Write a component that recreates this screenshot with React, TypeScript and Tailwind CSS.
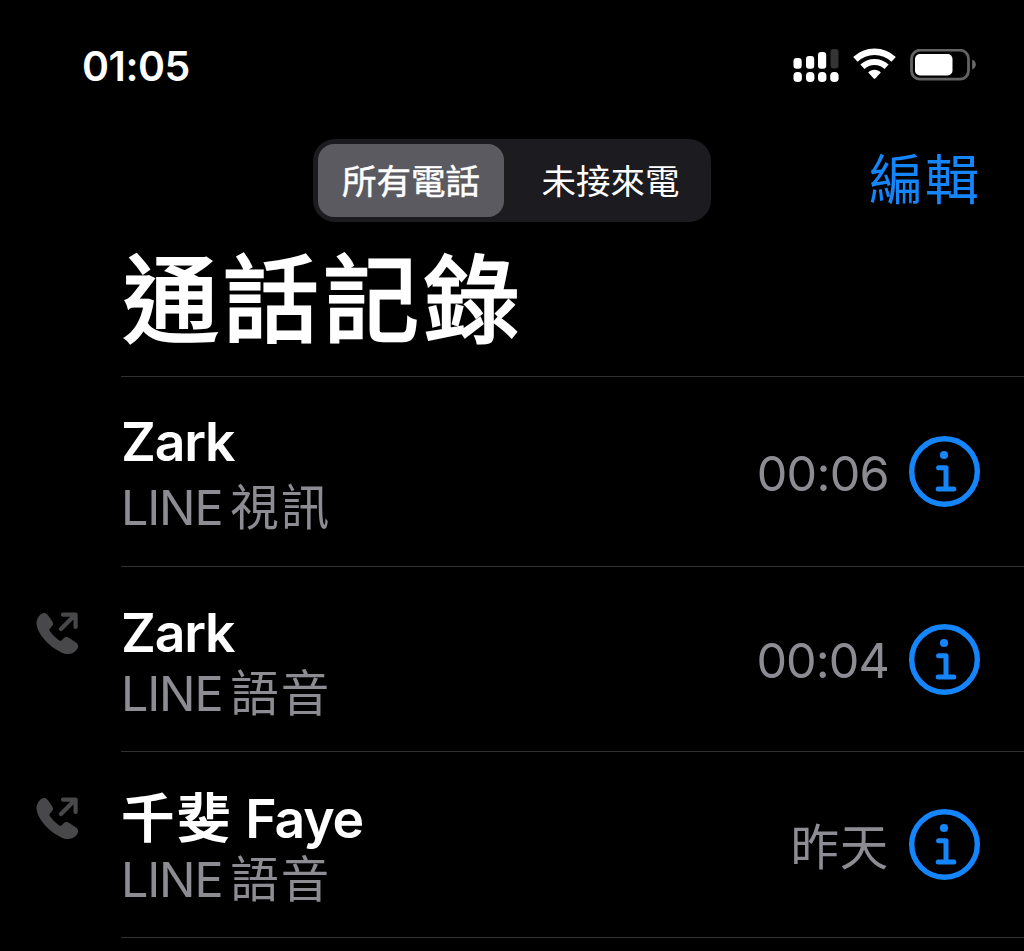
type Call = {
  prefix?: string;
  name: string;
  detail: string;
  time: string;
  outgoing: boolean;
  row: string;
  top: string;
  gap: string;
  timeStyle: string;
};

const calls: Call[] = [
  { name: 'Zark', detail: '視訊', time: '00:06', outgoing: false, row: 'h-[190px]', top: 'pt-[35px]', gap: 'mt-[11px]', timeStyle: 'pt-[4px] tracking-[-0.7px]' },
  { name: 'Zark', detail: '語音', time: '00:04', outgoing: true, row: 'h-[185px]', top: 'pt-[36px]', gap: 'mt-[6px]', timeStyle: 'pt-[4px] tracking-[-0.9px]' },
  { prefix: '千斐', name: ' Faye', detail: '語音', time: '昨天', outgoing: true, row: 'h-[186px]', top: 'pt-[37px]', gap: 'mt-[6px]', timeStyle: 'pt-[7px] tracking-[0.8px]' },
];

function SignalIcon() {
  return (
    <svg width="46" height="34" viewBox="0 0 46 34" fill="#fff">
      <rect x="0.5" y="10" width="8.2" height="10.8" rx="3.2" />
      <rect x="13" y="8" width="8.2" height="12.8" rx="3" />
      <rect x="25" y="4" width="8.2" height="16.8" rx="3" />
      <rect x="37.5" y="1" width="8" height="19.5" rx="3" fill="#343434" />
      <rect x="0.5" y="24" width="8.4" height="10" rx="3.8" />
      <rect x="13" y="24" width="8.4" height="10" rx="3.8" />
      <rect x="25" y="24" width="8.4" height="10" rx="3.8" />
      <rect x="37.2" y="24" width="8.4" height="10" rx="3.8" />
    </svg>
  );
}

function WifiIcon() {
  return (
    <svg width="44" height="32" viewBox="0 0 44 32" fill="none" stroke="#fff">
      <path d="M2.4 11.4 A27.5 27.5 0 0 1 40.6 11.4" strokeWidth="6.4" />
      <path d="M9.4 18.8 A17.6 17.6 0 0 1 33.6 18.8" strokeWidth="6" />
      <path d="M15.2 24.6 C18.6 20.8 24.4 20.8 27.8 24.6 L22.3 30.5 Q21.5 31.3 20.7 30.5 Z" fill="#fff" stroke="none" />
    </svg>
  );
}

function BatteryIcon() {
  return (
    <svg width="66" height="32" viewBox="0 0 66 32" fill="none">
      <rect x="1.5" y="1.2" width="57" height="29" rx="8.5" stroke="#636363" strokeWidth="2.8" />
      <rect x="5" y="5" width="37.5" height="21.5" rx="5" fill="#fff" />
      <path d="M62.2 10.6 Q65.8 12.2 65.8 15.6 Q65.8 19 62.2 20.6 Z" fill="#6b6b6b" />
    </svg>
  );
}

function InfoIcon() {
  return (
    <svg width="71" height="71" viewBox="0 0 71 71" fill="none" stroke="#1585fc" strokeLinecap="round" strokeLinejoin="round">
      <circle cx="35.5" cy="35.5" r="32.8" strokeWidth="5.4" />
      <circle cx="35" cy="19" r="4.1" fill="#1585fc" stroke="none" />
      <path d="M29.6 31.8 H37 V53 M29.2 53 H44.8" strokeWidth="5" />
    </svg>
  );
}

function OutgoingIcon() {
  return (
    <svg width="43" height="43" viewBox="0 0 43 43" fill="none">
      <path
        d="M3.4 3.8 C6 0.4 9.4 0 11.8 3 L16.2 9.2 C17.6 11.6 17.2 13.4 15.2 15.2 L14 16.4 C13.2 17.2 13.2 18 13.8 19 C16.2 22.6 19.4 25.8 23.2 28.4 C24.2 29.1 25 29 25.8 28.2 L27.2 26.8 C28.8 25 30.8 24.4 33.2 26 L40 30.6 C43 32.8 42.8 36.2 39.6 39 C36 42.4 31 42.8 25.4 40.4 C14.6 35.6 5.4 26.4 1.6 16.6 C-0.2 11.6 0.2 7.2 3.4 3.8 Z"
        fill="#48484b"
      />
      <path d="M25 17 L39.2 2.8 M27 2.6 H39.6 V15" stroke="#48484b" strokeWidth="4.2" strokeLinecap="round" strokeLinejoin="round" />
    </svg>
  );
}

function CallRow({ call }: { call: Call }) {
  return (
    <li className={`flex ${call.row}`}>
      <div className="w-[121px] shrink-0 pl-[36px] pt-[45px]">{call.outgoing && <OutgoingIcon />}</div>
      <div className="flex grow justify-between border-b border-[#313133] pr-[44px]">
        <div className={call.top}>
          <div className="whitespace-pre text-[53.5px] font-semibold leading-[60px] tracking-[-1.2px] text-white">
            {call.prefix && <span className="tracking-[2.5px]">{call.prefix}</span>}
            {call.name}
          </div>
          <div className={`flex gap-[8px] text-[48.5px] leading-[50px] text-[#8d8c93] ${call.gap}`}>
            <span className="tracking-[-1.2px]">LINE</span>
            <span className="tracking-[2px]">{call.detail}</span>
          </div>
        </div>
        <div className="flex items-center gap-[20px] text-[48.5px] leading-[60px] text-[#8d8c93]">
          <span className={call.timeStyle}>{call.time}</span>
          <InfoIcon />
        </div>
      </div>
    </li>
  );
}

export default function App() {
  return (
    <main className="h-[951px] w-[1024px] overflow-hidden whitespace-nowrap bg-black font-['Inter','Noto_Sans_CJK_TC',sans-serif] text-white">
      <header className="flex h-[139px] items-start justify-between pl-[82px] pr-[48px] pt-[40px]">
        <div className="pt-px text-[41px] font-semibold leading-[50px] tracking-[-0.5px]">01:05</div>
        <div className="flex items-start pt-[8px]">
          <SignalIcon />
          <div className="ml-[14px]">
            <WifiIcon />
          </div>
          <div className="ml-[13px] pt-px">
            <BatteryIcon />
          </div>
        </div>
      </header>
      <nav className="flex h-[83px] justify-between pl-[313px] pr-[43px]">
        <div className="flex w-[398px] rounded-[22px] bg-[#1c1b20] p-[5px] text-[34.5px] leading-[73px]">
          <button className="w-[186px] rounded-[16px] bg-[#5b5a60] pt-[3px] font-normal leading-[70px] [-webkit-text-stroke:0.5px_white]">所有電話</button>
          <button className="grow pl-[11px] pt-[3px] leading-[70px]">未接來電</button>
        </div>
        <button className="text-[54px] leading-[78px] tracking-[2px] text-[#1585fc]">編輯</button>
      </nav>
      <h1 className="h-[154px] pl-[123px] pt-[18px] text-[95.5px] font-normal leading-[120px] tracking-[4.8px] [-webkit-text-stroke:2.8px_white]">通話記錄</h1>
      <div className="ml-[121px] h-px bg-[#313133]" />
      <ul>
        {calls.map((call, i) => (
          <CallRow key={i} call={call} />
        ))}
      </ul>
    </main>
  );
}
